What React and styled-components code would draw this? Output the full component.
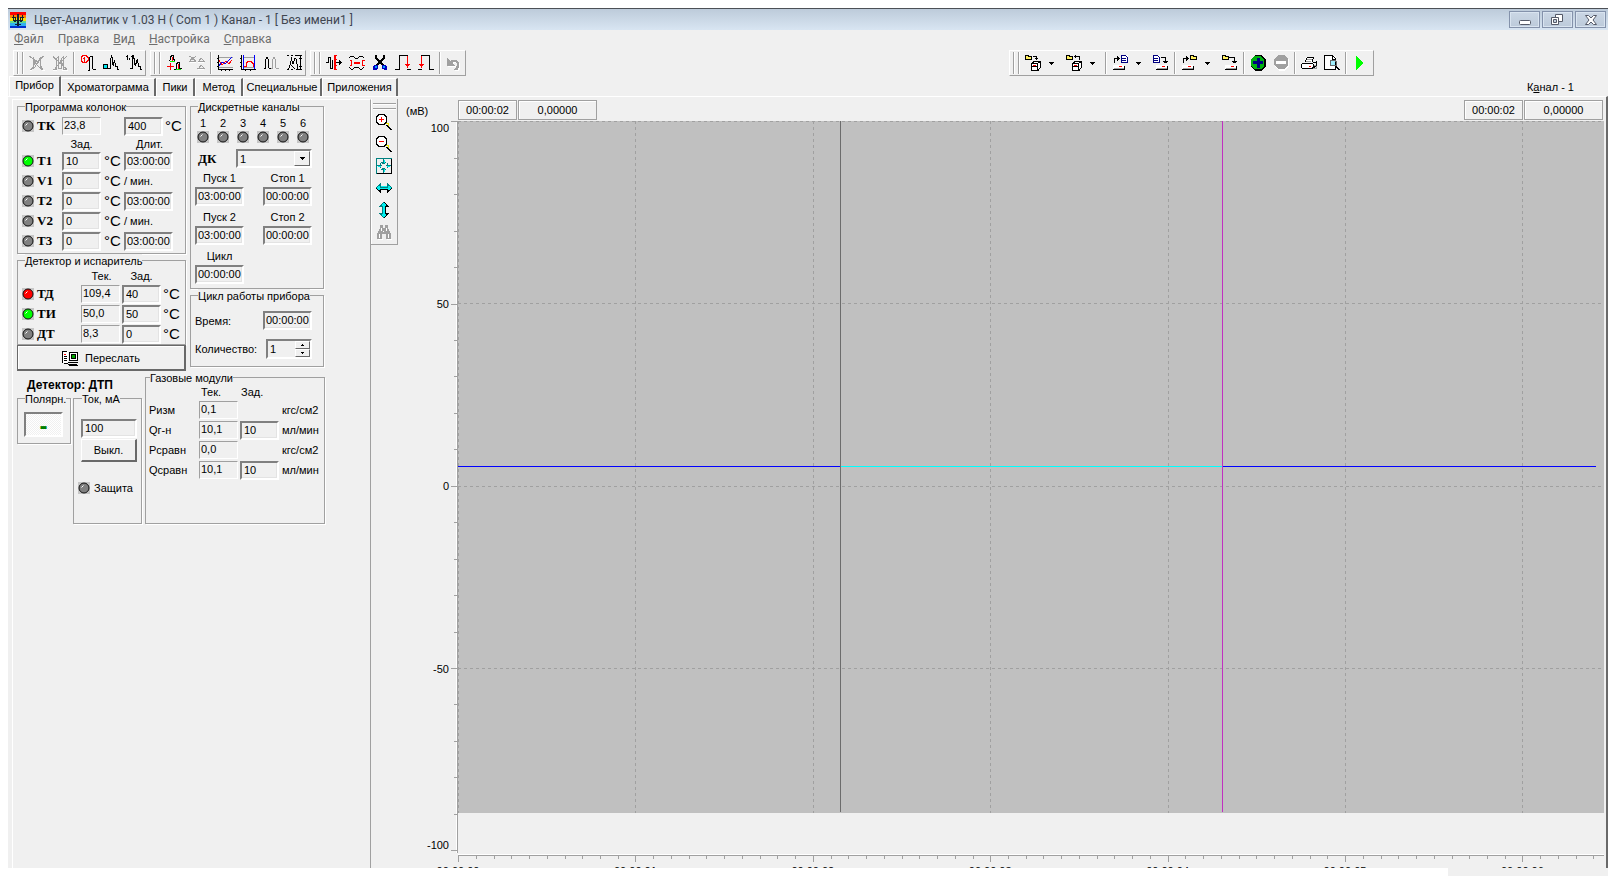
import React from "react";
import styled, { createGlobalStyle, css } from "styled-components";

const face = "#f0f0f0";
const shade = "#a0a0a0";
const dark = "#696969";
const uiFont = '"Liberation Sans", Arial, sans-serif';
const captionFont = 'Roboto, "Noto Sans", sans-serif';

const GlobalStyle = createGlobalStyle`
  * { box-sizing: border-box; }
  body { margin: 0; background: #fff; color: #000; font: 11px/12px ${uiFont}; }
  button, input, select, output { font: inherit; color: inherit; margin: 0; border-radius: 0; }
  svg { display: block; }
`;

const Page = styled.div`
  display: flex;
  flex-direction: column;
  min-height: 100vh;
  padding: 8px 8px 0;
`;
const Window = styled.div`
  display: flex;
  flex: 1;
  flex-direction: column;
  background: ${face};
  border-top: 1px solid #4c5056;
`;
const BottomStrip = styled.div`
  align-self: flex-end;
  width: 10%;
  height: 8px;
  background: ${face};
`;

/* Caption and menu */
const TitleBar = styled.header`
  display: flex;
  align-items: center;
  height: 21px;
  padding: 0 2px;
  background: linear-gradient(#bdcbda, #d8e5f2);
`;
const Title = styled.h1`
  flex: 1;
  margin: 0 0 0 8px;
  font: 12px/18px ${captionFont};
  color: #3f4650;
  white-space: nowrap;
`;
const CaptionButtons = styled.div`
  display: flex;
  gap: 2px;
`;
const CaptionButton = styled.button`
  display: flex;
  align-items: center;
  justify-content: center;
  width: 31px;
  height: 17px;
  padding: 0;
  background: linear-gradient(#cbd7e5, #bccada);
  border: 1px solid #8492ab;
  box-shadow: inset 0 0 0 1px #d9e4f0;
`;
const MenuBar = styled.nav`
  display: flex;
  height: 20px;
`;
const MenuItem = styled.button`
  padding: 0 8px 2px 6px;
  background: none;
  border: 0;
  font: 12px/18px ${captionFont};
  color: #6d6d6d;
`;

/* Toolbars */
const ToolRow = styled.div`
  display: flex;
  gap: 4px;
  padding-left: 5px;
`;
const Band = styled.div`
  display: flex;
  align-items: center;
  height: 26px;
  border: 1px solid;
  border-color: #fff ${shade} ${shade} #fff;
  ${(p) => p.$floating && css`margin: 0 234px 0 auto; padding-right: 2px;`}
`;
const Grip = styled.span`
  width: 6px;
  height: 22px;
  margin: 0 2px 0 3px;
  border: solid ${shade};
  border-width: 0 1px;
  box-shadow: inset 1px 0 #fff, inset -1px 0 ${face}, 1px 0 #fff;
`;
const ToolButton = styled.button`
  display: flex;
  align-items: center;
  justify-content: center;
  width: 23px;
  height: 22px;
  padding: 0;
  background: none;
  border: 0;
`;
const DropButton = styled(ToolButton)`
  width: 18px;
  padding-right: 4px;
`;
const Separator = styled.span`
  width: 1px;
  height: 22px;
  margin: 0 2px;
  background: ${shade};
  box-shadow: 1px 0 #fff;
`;

/* Tabs */
const TabRow = styled.div`
  display: flex;
  align-items: flex-end;
  height: 20px;
  padding-left: 1px;
`;
const Tab = styled.button`
  min-width: ${(p) => p.$width}px;
  height: ${(p) => (p.$active ? 20 : 18)}px;
  padding: ${(p) => (p.$active ? "0 2px 4px" : "0 2px 1px")};
  background: ${face};
  border: solid;
  border-width: 1px 2px 0 1px;
  border-color: #fff ${dark} #fff #fff;
  white-space: nowrap;
`;
const ChannelName = styled.span`
  margin: 0 34px 3px auto;
  white-space: nowrap;
`;

/* Main area */
const Main = styled.main`
  display: flex;
  flex: 1;
  padding: 2px 2px 0 4px;
  border-top: 1px solid #fff;
  border-right: 2px solid ${dark};
`;
const SidePanel = styled.section`
  width: 359px;
  padding: 0 0 0 4px;
  border: solid;
  border-width: 1px 1px 0;
  border-color: #fff ${shade} #fff #fff;
`;
const Columns = styled.div`
  display: flex;
  gap: ${(p) => p.$gap || 0}px;
  align-items: ${(p) => p.$align || "stretch"};
`;
const Column = styled.div`
  width: ${(p) => p.$width}px;
`;
const Group = styled.fieldset`
  min-width: 0;
  width: ${(p) => (p.$width ? `${p.$width}px` : "auto")};
  margin: 0;
  padding: ${(p) => p.$pad || "0"};
  border: 1px solid ${shade};
  box-shadow: 1px 1px #fff;
`;
const Legend = styled.legend`
  height: 13px;
  margin-left: ${(p) => (p.$flush ? 1 : 7)}px;
  padding: 2px 0 0;
  line-height: 11px;
  white-space: nowrap;
  background: ${face};
`;
const Grid = styled.div`
  display: grid;
  grid-template-columns: ${(p) => p.$cols};
  grid-auto-rows: 20px;
  align-items: center;
  white-space: nowrap;
`;
const HeadRow = styled(Grid)`
  grid-auto-rows: ${(p) => p.$height}px;
  text-align: ${(p) => p.$text || "center"};
`;
const Unit = styled.span`
  padding-left: ${(p) => p.$gap || 0}px;
  font-size: 15px;
`;
const Name = styled.label`
  font: bold 13px/16px "Liberation Serif", "Times New Roman", serif;
`;
const Field = styled.input`
  width: ${(p) => p.$width || 39}px;
  height: 19px;
  padding: 0 0 1px 2px;
  background: ${face};
  border: 2px solid;
  border-color: #808080 #fff #fff #808080;
  box-shadow: inset -1px -1px #e3e3e3;
`;
const TimeField = styled(Field)`
  width: 49px;
  padding-left: 1px;
`;
const Readout = styled.output`
  display: block;
  width: 39px;
  height: 18px;
  padding: 1px 1px 0;
  border: 1px solid;
  border-color: ${shade} #fff #fff ${shade};
`;
const Paired = styled.div`
  display: flex;
  align-items: center;
  gap: 2px;
`;
const LampCell = styled.span`
  padding-left: 4px;
`;
const SendButton = styled.button`
  display: flex;
  align-items: center;
  justify-content: center;
  gap: 7px;
  width: 100%;
  height: 26px;
  padding: 0;
  background: ${face};
  border: solid;
  border-width: 1px 2px 2px 1px;
  border-color: ${dark};
  box-shadow: inset 1px 1px #fff;
`;
const PushButton = styled.button`
  display: block;
  width: 56px;
  height: 23px;
  margin-top: 1px;
  padding: 0;
  background: ${face};
  border: solid;
  border-width: 1px 2px 2px 1px;
  border-color: #fff ${dark} ${dark} #fff;
`;
const Lamps = styled.div`
  display: grid;
  grid-template-columns: repeat(6, 20px);
  justify-items: center;
  row-gap: 2px;
  padding: 4px 2px 6px;
`;
const ComboRow = styled.div`
  display: flex;
  align-items: center;
  justify-content: space-between;
  padding: 0 11px 0 7px;
`;
const Combo = styled.div`
  position: relative;
  width: 76px;
`;
const Select = styled.select`
  appearance: none;
  display: block;
  width: 100%;
  height: 19px;
  padding: 0 2px;
  background: ${face};
  border: 2px solid;
  border-color: #808080 #fff #fff #808080;
`;
const ComboArrow = styled.span`
  position: absolute;
  top: 2px;
  right: 2px;
  display: flex;
  align-items: center;
  justify-content: center;
  width: 16px;
  height: 15px;
  background: ${face};
  border: 1px solid;
  border-color: #fff ${dark} ${dark} #fff;
  pointer-events: none;
`;
const TimeGrid = styled.div`
  display: grid;
  grid-template-columns: 49px 49px;
  column-gap: 19px;
  padding-left: 4px;
`;
const TimeCell = styled.label`
  display: flex;
  flex-direction: column;
  height: 39px;
  padding-top: 2px;
  text-align: center;
  line-height: 17px;
`;
const CycleRow = styled.div`
  display: flex;
  align-items: center;
  justify-content: space-between;
`;
const CycleBody = styled.div`
  display: flex;
  flex-direction: column;
  gap: 9px;
  padding: 9px 11px 7px 4px;
`;
const Spin = styled.div`
  display: flex;
  width: 46px;
  height: 20px;
  border: 2px solid;
  border-color: #808080 #fff #fff #808080;
`;
const SpinInput = styled.input`
  flex: 1;
  min-width: 0;
  padding: 0 2px;
  background: ${face};
  border: 0;
`;
const SpinButtons = styled.div`
  display: flex;
  flex-direction: column;
  width: 15px;
`;
const SpinButton = styled.button`
  display: flex;
  flex: 1;
  align-items: center;
  justify-content: center;
  padding: 0;
  background: ${face};
  border: 1px solid;
  border-color: #fff ${dark} ${dark} #fff;
`;
const DetectorName = styled.h2`
  margin: 0;
  padding: 7px 0 0 10px;
  height: 21px;
  font: bold 12px/14px ${uiFont};
`;
const Polarity = styled.output`
  display: flex;
  align-items: center;
  justify-content: center;
  width: 39px;
  height: 25px;
  padding-top: 2px;
  border: 2px solid;
  border-color: #808080 #fff #fff #808080;
  background: repeating-conic-gradient(#fff 0 25%, ${face} 0 50%) 0 0 / 2px 2px;
  color: #008000;
  font: bold 24px/20px ${uiFont};
`;
const Guard = styled.div`
  display: flex;
  align-items: center;
  gap: 4px;
  margin: 20px 0 0 -3px;
`;

/* Chart */
const ViewTools = styled.div`
  display: flex;
  flex-direction: column;
  align-items: center;
  align-self: flex-start;
  width: 27px;
  padding: 4px 0 1px;
  border: solid;
  border-width: 0 1px 1px 0;
  border-color: ${shade};
  box-shadow: inset 1px 0 #fff;
`;
const ViewGrip = styled.span`
  width: 23px;
  height: 6px;
  margin-bottom: 2px;
  border: solid ${shade};
  border-width: 1px 0;
  box-shadow: inset 0 1px #fff, 0 1px #fff;
`;
const ChartPane = styled.section`
  display: flex;
  flex: 1;
  min-width: 0;
  flex-direction: column;
  overflow: hidden;
`;
const StatusRow = styled.div`
  display: flex;
  gap: 1px;
  height: 22px;
  padding: 1px 1px 1px 0;
`;
const AxisUnit = styled.span`
  width: 59px;
  padding: 5px 0 0 8px;
`;
const StatusBox = styled.output`
  width: ${(p) => p.$width}px;
  border: 1px solid ${shade};
  box-shadow: inset 1px 1px #fff;
  line-height: 19px;
  text-align: center;
  ${(p) => p.$push && css`margin-left: auto;`}
`;
const PlotRow = styled.div`
  display: flex;
  flex: 1;
`;
const YAxis = styled.svg`
  width: 60px;
  overflow: visible;
`;
const Plot = styled.svg`
  flex: 1;
  min-width: 0;
`;
const XAxisRow = styled.div`
  height: 15px;
  padding-left: 60px;
`;
const XAxis = styled.svg`
  width: 100%;
  height: 15px;
  overflow: visible;
`;

/* Icons: each layer is [colour, path, filled] */
function Icon({ size = 16, layers }) {
  return (
    <svg width={size} height={size} viewBox="0 0 16 16" shapeRendering="crispEdges" aria-hidden="true">
      {layers.map(([color, d, filled], i) => (
        <path key={i} d={d} fill={filled ? color : "none"} stroke={filled ? "none" : color} />
      ))}
    </svg>
  );
}

const K = "#000";
const R = "#f00";
const cube = [
  ["#fff", "M6 9l3-3h6v6l-3 3H6z", true],
  [K, "M6.500 8.500h6v7h-6zM6.500 8.500L9 6.500h6.500v6L13 15.500M12.500 8.500l3-2M7 11.500h5"],
  [R, "M8 10h3v1H8z", true],
];
const folder = (x, y) => [
  ["#ffef60", `M${x + 1} ${y + 1}h5v3h-5z`, true],
  [K, `M${x}.5 ${y}.5h3v1h3v3h-6z`],
];
const drive = (x) => [
  ["#fff", `M${x} 10h11v4h-11z`, true],
  [shade, `M${x + 1} 13.500h10`],
  [K, `M${x} 14.500h11.500v-4`],
  [R, `M${x + 6} 11h3v1h-3z`, true],
];
const sheet = (x) => [
  ["#fff", `M${x} 0h7v7h-7z`, true],
  ["#000080", `M${x}.5 .500h4l2 2v5h-6zM${x + 1} 3.500h4M${x + 1} 5.500h4`],
];
const lens = [
  ["#fff", "M3 1h5l2 2v5l-2 2H3L1 8V3z", true],
  [K, "M3 .500h5L10.500 3v5L8 10.500H3L.5 8V3zM11 11l5 5M10 11l5 5"],
  ["#ee0", "M10 9.500h2v2"],
];

const icons = {
  app: [
    ["#f00", "M0 0h16v4H0z", true], ["#ff8000", "M0 3h16v3H0z", true], ["#ffe000", "M0 6h16v3H0z", true],
    ["#60d890", "M0 9h16v2H0z", true], ["#30b0f0", "M0 11h16v3H0z", true], ["#0030d0", "M0 14h16v2H0z", true],
    ["#102030", "M8.500 2v12M7.500 2v12M3.500 3v6M12.500 3v6M5.500 5v4M10.500 5v4M2 5.500h3M11 5.500h3M3 8.500h10M5 12.500h6M4 9.500h2M10 9.500h2"],
  ],
  peaksOff: [[shade, "M.5 1.500L5 4l2 5 6 5.500M1 14.500l3-2L7 5l2 3 2-5 1 8 2 3.500M14.500 1L9 7l-3 5-4 3M4.500 2v12M11.500 2v12"], ["#fff", "M1 15.500h2M13 15.500h3"]],
  peaksOff2: [[shade, "M1 1.500L15 14.500M15 1L6 10l-4 5M1 14.500h3V4l2-2v11h3V4l2-2v12h4M8 5l3 5"], ["#fff", "M1 15.500h4M10 15.500h6"]],
  onePeak: [[R, "M3 .500h3l2 2v3l-2 2H3l-2-2v-3zM4.500 2v5M3 3.500h2"], [K, "M8 15.500h1.500V3l1-2h2v12l1 1.500h2"]],
  levelPeak: [[K, "M5 13.500h2.500V5l1-4 1 3v5l1 1 1-5 1 6h2v3h2"], ["#00e5ee", "M1 10h3v3H1z", true], [K, "M.5 9.500h4v4h-4z"]],
  ratioPeak: [[K, "M1.500 0v5M0 1.500h2M6.500 0v5M5 1.500h2M3.500 3v2M4 13.500h2.500V7l1-5 1 3v4l1 1 2-6 1 7h2v3h2"]],
  addPeak: [[K, "M3 5.500h1l1-4 1-1h1l1 4 1 1M8 14.500h2l1-6 1-1h1l1 6h2"], [R, "M1 11.500h7M4.500 8v7M6.500 2v4M12.500 9v5"], ["#0f0", "M4 6.500h5M10 14.500h5"]],
  peaksOff3: [[shade, "M0 6.500h7M1 6l2-4 3 4M1 1l6 5M7 1L1 6M9 6.500h7M10 6l2-3 3 3M0 1.500h2M8 13.500h8M10 13l2-3 3 3"], ["#fff", "M1 7.500h6M9 7.500h6M9 14.500h6"]],
  chartLines: [[K, "M1.500 0v14.500H16M0 3.500h2M0 7.500h2M0 11.500h2M4.500 14v2M8.500 14v2M12.500 14v2"], [shade, "M2 2.500h14M2 12.500h14"], ["#00f", "M2 11l3-4 3 2 4-4 3-3"], [R, "M2 5l3 5 4-4 3 3 3-4"]],
  chartFrame: [[K, "M1.500 0v14.500H16M0 3.500h2M0 7.500h2M0 11.500h2M5.500 14v2M10.500 14v2"], ["#00f", "M3.500 0v14M14.500 0v14"], [shade, "M4 2.500h10M4 12.500h10"], [R, "M4 11.500h2v-3l2-2h3l2 2v3h1"]],
  twinPeaks: [[K, "M1 13.500h1.500V6l1-4h1l1 4v6l1 1.500h2"], [shade, "M8 13.500h1.500V6l1-4h1l1 4v6l1 1.500h2"]],
  measure: [[K, "M1 .500h2M5 .500h2M9 .500h7M1 14.500h2M5 14.500h2M10 14.500h6M14.500 1v13M13 3.500h3M13 11.500h3M2 13.500h1L5.500 4 7 9l2-6 1 1 2 9.500M4 9l5 5"]],
  shift: [[K, "M0 7.500h2.500V2.500h2v11h2V4.500M10 7.500h6M13.500 5v5M14.500 6v3"], [R, "M8.500 0v15M9.500 0v15M8 .500h3M8 4.500h3M8 10.500h3M8 14.500h3"]],
  bounds: [[K, "M0 3l2-2h2l2 2h3l2-2h2l2 2M0 12l2 2h2l2-2h3l2 2h2l2-2"], [R, "M.5 5.500h2v5H.5M15.500 5.500h-2v5h2M5 7.500h6M5 8.500h6"]],
  cut: [[K, "M3.500 0v3l7 7M12.500 0v3l-7 7M4.500 0v3l7 7M11.500 0v3l-7 7"], ["#0000c0", "M2.500 10.500h3v3h-3zM10.500 10.500h3v3h-3zM1.500 11v3h3M14.500 11v3h-3"], ["#00a0ff", "M3 11h2v2H3zM11 11h2v2h-2z", true]],
  pulseEnd: [[K, "M0 14.500h4.500V.500h8M12 14.500h4"], [R, "M12.500 1v12M10 9.500h5M11 10.500h3M12 11.500h1"]],
  pulseStart: [[K, "M0 14.500h4M3 .500h8.500v14H16"], [R, "M3.500 1v12M1 9.500h5M2 10.500h3M3 11.500h1"]],
  undo: [["#fff", "M2 4v8h8l-3-3c4-3 6 0 4 4l-2 3h4c4-8-1-13-8-9z", true], [shade, "M1 3v8h8L6 8c4-3 6 0 4 4l-2 3h4c4-8-1-13-8-9z", true]],
  loadBox: [...folder(0, 0), ...cube, [K, "M8 1.500h3.500v3M10 3.500h3"]],
  saveBox: [...folder(0, 0), ...cube, [K, "M9 1.500h4.500v3M9.500 0v3M8 1.500h2"]],
  openSheet: [...sheet(9), ...drive(1), [K, "M2.500 8V3.500h5M5.500 1v5M6.500 2v3"]],
  saveSheet: [...sheet(0), ...drive(3), [K, "M8 2.500h4.500V8M10 6.500h5M11 7.500h3"]],
  openFolder: [...folder(9, 0), ...drive(1), [K, "M2.500 8V3.500h5M5.500 1v5M6.500 2v3"]],
  saveFolder: [...folder(0, 0), ...drive(3), [K, "M7 2.500h5.500V8M10 6.500h5M11 7.500h3"]],
  plus: [[K, "M5 0h7l4 5v6l-4 5H5l-4-4V4z", true], ["#00b010", "M5 1h6l3 4v6l-3 3H4l-3-3V4z", true], ["#000080", "M7 3h3v3h3v3h-3v4H7V9H3V6h4z", true]],
  minus: [["#fff", "M6 1h6l4 4v6l-4 5H6l-4-4V5z", true], [shade, "M5 0h6l4 4v6l-4 4H5l-4-4V4z", true], ["#fff", "M3 6h10v3H3z", true]],
  print: [["#fff", "M5 2h8l-2 5H3zM1 8h12v5H1z", true], [shade, "M6 4.500h5M5 6.500h5M12 10h3v3h-3z"], [K, "M4 7L6.500 2.500h6L11 7M1.500 8.500h10l1 1v3l-2 1h-9l-1-1v-3zM12 8l3-1v4l-3 2"], [R, "M8 11h2v1H8z", true]],
  preview: [["#fff", "M1 1h11v14H1z", true], [K, "M.5 .500h8l3 3v11H.5zM8.500 1v3h3M11 11l4 4M12 11l4 4"], ["#a0f0ff", "M7 6h4v4H7z", true], [dark, "M7 5.500h4l1 1v4h-5l-1-1v-3z"]],
  play: [["#0f0", "M4 1l7 7-7 7z", true]],
  zoomIn: [...lens, [R, "M3 5.500h5M5.500 3v5"]],
  zoomOut: [...lens, [R, "M3 5.500h5"]],
  fit: [[K, "M0 15.500h16M15.500 0v16"], ["#008080", "M.5 16V.500h15M7.500 1v5M7.500 10v5M1 7.500h5M10 7.500h5M5 4.500h5M6 5.500h3M5 11.500h5M6 10.500h3M4.500 5v5M11.500 5v5"], ["#0ee", "M8.500 2v3M8.500 11v3M2 8.500h3M11 8.500h3"]],
  horizontal: [["#0ee", "M0 8l5-5v3h6V3l5 5-5 5v-3H5v3z", true], ["#008080", "M0 8l4.500-4v3h7V4L16 8"], [K, "M0 8l4.500 4V9.500h7V12L16 8"]],
  vertical: [["#0ee", "M8 0l5 5h-3v6h3l-5 5-5-5h3V5H3z", true], ["#008080", "M8 0L4 4.500h2.500v7H4L8 16"], [K, "M8 0l4 4.500H9.500v7H12L8 16"]],
  binoculars: [
    ["#fff", "M2 15h5v1H2zM11 15h5v1h-5z", true],
    [shade, "M4 1h3v3h2V1h3v3l1 2 2 4v5h-5v-5H6v5H1v-5l2-4 1-2z", true],
    ["#fff", "M3 10h1v4H3zM12 10h1v4h-1zM5 4h1v3H5zM10 4h1v3h-1zM7 7h1v1H7z", true],
  ],
  send: [["#fff", "M1 1h5v12H1zM8 3h7v8H8z", true], [K, "M.5 13V1.500H5M7.500 2.500h8v8h-8zM9.500 4.500h4v4h-4zM2 13.500h4M6 12.500h10M6 14.500h9M7 15.500h9"], ["#0a0", "M10 5h3v3h-3z", true], [R, "M2 4h2v1H2z", true], [K, "M2 6.500h3M2 8.500h3M2 10.500h3"]],
};

const ledColors = { off: "#808080", green: "#00ff00", red: "#ff0000" };
function Led({ state = "off", label }) {
  return (
    <svg width="12" height="12" viewBox="0 0 12 12" role="img" aria-label={label || state}>
      <rect width="12" height="12" fill="#c6c6c6" />
      <circle cx="6" cy="6" r="5" fill={ledColors[state]} stroke="#111" />
      <path d="M3.500 5.500L5.500 3.500" stroke="#fff" />
    </svg>
  );
}

function Arrow({ up, small }) {
  return (
    <svg width={small ? 3 : 6} height={small ? 2 : 3} viewBox="0 0 6 3" preserveAspectRatio="none" shapeRendering="crispEdges" aria-hidden="true">
      <path d={up ? "M0 3h6L3 0z" : "M0 0h6L3 3z"} />
    </svg>
  );
}

const leftBands = [
  [["peaksOff", "Убрать пики"], ["peaksOff2", "Убрать разметку"], null, ["onePeak", "Один пик"], ["levelPeak", "Уровень"], ["ratioPeak", "Отношение"]],
  [["addPeak", "Добавить пик"], ["peaksOff3", "Удалить пик"], null, ["chartLines", "Графики"], ["chartFrame", "Рамка"], ["twinPeaks", "Сравнение"], ["measure", "Измерение"]],
  [["shift", "Сдвиг"], ["bounds", "Границы"], ["cut", "Вырезать"], ["pulseEnd", "Конец"], ["pulseStart", "Начало"], null, ["undo", "Отменить"]],
];
const fileBand = [
  ["loadBox", "Загрузить", true], ["saveBox", "Сохранить", true], null,
  ["openSheet", "Открыть метод", true], ["saveSheet", "Сохранить метод"], null,
  ["openFolder", "Открыть файл", true], ["saveFolder", "Сохранить файл"], null,
  ["plus", "Добавить"], ["minus", "Удалить"], null,
  ["print", "Печать"], ["preview", "Просмотр"], null,
  ["play", "Пуск"],
];

function ToolBand({ items, floating }) {
  return (
    <Band $floating={floating} role="toolbar">
      <Grip />
      {items.map((item, i) =>
        item ? (
          <React.Fragment key={i}>
            <ToolButton aria-label={item[1]}><Icon layers={icons[item[0]]} /></ToolButton>
            {item[2] && <DropButton aria-label={`${item[1]}: список`}><Arrow /></DropButton>}
          </React.Fragment>
        ) : (
          <Separator key={i} />
        )
      )}
    </Band>
  );
}

const stages = [
  { id: "T1", value: "10", time: "03:00:00", state: "green" },
  { id: "V1", value: "0" },
  { id: "T2", value: "0", time: "03:00:00" },
  { id: "V2", value: "0" },
  { id: "T3", value: "0", time: "03:00:00" },
];
const heaters = [
  { id: "ТД", now: "109,4", set: "40", state: "red" },
  { id: "ТИ", now: "50,0", set: "50", state: "green" },
  { id: "ДТ", now: "8,3", set: "0", state: "off" },
];
const gases = [
  { name: "Ризм", now: "0,1", unit: "кгс/см2" },
  { name: "Qг-н", now: "10,1", set: "10", unit: "мл/мин" },
  { name: "Рсравн", now: "0,0", unit: "кгс/см2" },
  { name: "Qсравн", now: "10,1", set: "10", unit: "мл/мин" },
];
const timers = [["Пуск 1", "03:00:00"], ["Стоп 1", "00:00:00"], ["Пуск 2", "03:00:00"], ["Стоп 2", "00:00:00"], ["Цикл", "00:00:00"]];
const programCols = "19px 25px 39px 23px 1fr";

function ColumnProgram() {
  return (
    <Group $pad="3px 0 2px">
      <Legend>Программа колонок</Legend>
      <Grid $cols={programCols}>
        <LampCell><Led /></LampCell>
        <Name htmlFor="tk">ТК</Name>
        <Readout>23,8</Readout>
        <span />
        <Paired><Field id="tk" defaultValue="400" /><Unit>°C</Unit></Paired>
      </Grid>
      <HeadRow $cols="44px 39px 24px 49px" $height={15}>
        <span /><span>Зад.</span><span /><span>Длит.</span>
      </HeadRow>
      <Grid $cols={programCols}>
        {stages.map((s) => (
          <React.Fragment key={s.id}>
            <LampCell><Led state={s.state} /></LampCell>
            <Name htmlFor={s.id}>{s.id}</Name>
            <Field id={s.id} defaultValue={s.value} />
            <Unit $gap={3}>°C</Unit>
            {s.time ? <TimeField aria-label={`${s.id} длительность`} defaultValue={s.time} /> : <span>/ мин.</span>}
          </React.Fragment>
        ))}
      </Grid>
    </Group>
  );
}

function Heaters() {
  return (
    <Group>
      <Legend>Детектор и испаритель</Legend>
      <HeadRow $cols="63px 41px 39px" $height={17}>
        <span /><span>Тек.</span><span>Зад.</span>
      </HeadRow>
      <Grid $cols="19px 44px 41px 39px 1fr">
        {heaters.map((h) => (
          <React.Fragment key={h.id}>
            <LampCell><Led state={h.state} /></LampCell>
            <Name htmlFor={h.id}>{h.id}</Name>
            <Readout>{h.now}</Readout>
            <Field id={h.id} defaultValue={h.set} />
            <Unit $gap={2}>°C</Unit>
          </React.Fragment>
        ))}
      </Grid>
    </Group>
  );
}

function Channels() {
  return (
    <Group $pad="0 0 3px">
      <Legend>Дискретные каналы</Legend>
      <Lamps>
        {[1, 2, 3, 4, 5, 6].map((n) => <span key={n}>{n}</span>)}
        {[1, 2, 3, 4, 5, 6].map((n) => <Led key={n} label={`Канал ${n}`} />)}
      </Lamps>
      <ComboRow>
        <Name htmlFor="dk">ДК</Name>
        <Combo>
          <Select id="dk" defaultValue="1">{[1, 2, 3, 4, 5, 6].map((n) => <option key={n}>{n}</option>)}</Select>
          <ComboArrow><Arrow /></ComboArrow>
        </Combo>
      </ComboRow>
      <TimeGrid>
        {timers.map(([name, value]) => (
          <TimeCell key={name}>{name}<TimeField defaultValue={value} /></TimeCell>
        ))}
      </TimeGrid>
    </Group>
  );
}

function Cycle() {
  return (
    <Group>
      <Legend>Цикл работы прибора</Legend>
      <CycleBody>
        <CycleRow><label htmlFor="time">Время:</label><TimeField id="time" defaultValue="00:00:00" /></CycleRow>
        <CycleRow>
          <label htmlFor="count">Количество:</label>
          <Spin>
            <SpinInput id="count" defaultValue="1" />
            <SpinButtons>
              <SpinButton aria-label="Больше"><Arrow up small /></SpinButton>
              <SpinButton aria-label="Меньше"><Arrow small /></SpinButton>
            </SpinButtons>
          </Spin>
        </CycleRow>
      </CycleBody>
    </Group>
  );
}

function Detector() {
  return (
    <Column $width={128}>
      <DetectorName>Детектор: ДТП</DetectorName>
      <Columns $gap={2} $align="flex-start">
        <Group $width={54} $pad="7px 0 6px 6px">
          <Legend $flush>Полярн.</Legend>
          <Polarity>-</Polarity>
        </Group>
        <Group $width={69} $pad="14px 0 29px 7px">
          <Legend $flush>Ток, мА</Legend>
          <Field $width={56} aria-label="Ток, мА" defaultValue="100" />
          <PushButton>Выкл.</PushButton>
          <Guard><Led /><span>Защита</span></Guard>
        </Group>
      </Columns>
    </Column>
  );
}

function GasModules() {
  return (
    <Group $width={180} $pad="0 0 0 3px">
      <Legend $flush>Газовые модули</Legend>
      <HeadRow $cols="52px 40px 40px" $height={16} $text="left">
        <span /><span>Тек.</span><span>Зад.</span>
      </HeadRow>
      <Grid $cols="50px 41px 42px 1fr">
        {gases.map((g) => (
          <React.Fragment key={g.name}>
            <span>{g.name}</span>
            <Readout>{g.now}</Readout>
            {g.set ? <Field aria-label={g.name} defaultValue={g.set} /> : <span />}
            <span>{g.unit}</span>
          </React.Fragment>
        ))}
      </Grid>
    </Group>
  );
}

/* Chart geometry, in percent of the plot */
const xMajor = [0, 1, 2, 3, 4, 5, 6];
const xStep = 15.48;
const yLabels = [100, 50, 0, -50, -100];
const signal = [
  { from: 0, to: 33.4, color: "#0000ff" },
  { from: 33.4, to: 66.7, color: "#00ffff" },
  { from: 66.7, to: 99.3, color: "#0000ff" },
];

function Chart() {
  const xMinor = Array.from({ length: 65 }, (_, i) => (i * xStep) / 10).filter((x) => x < 100);
  return (
    <ChartPane>
      <StatusRow>
        <AxisUnit>(мВ)</AxisUnit>
        <StatusBox $width={59}>00:00:02</StatusBox>
        <StatusBox $width={79}>0,00000</StatusBox>
        <StatusBox $width={59} $push>00:00:02</StatusBox>
        <StatusBox $width={79}>0,00000</StatusBox>
      </StatusRow>
      <PlotRow>
        <YAxis shapeRendering="crispEdges">
          <line x1="58.500" x2="58.500" y1="0" y2="100%" stroke="#fff" />
          <line x1="59.500" x2="59.500" y1="0" y2="100%" stroke={shade} />
          {Array.from({ length: 21 }, (_, i) => (
            <line key={i} x1={i % 5 ? 56 : 53} x2="59" y1={`${i * 4.98 + 0.1}%`} y2={`${i * 4.98 + 0.1}%`} stroke={shade} />
          ))}
          {yLabels.map((v, i) => (
            <text key={v} x="51" y={`${i * 24.95}%`} dy={i === 0 ? 11 : i === 4 ? -3 : 4} textAnchor="end">{v}</text>
          ))}
        </YAxis>
        <Plot shapeRendering="crispEdges">
          <rect width="100%" height="94.5%" fill="#c0c0c0" />
          <g stroke={shade} strokeDasharray="3 3">
            {[0.1, 24.9, 49.9, 74.8].map((y) => <line key={y} x1="0" x2="100%" y1={`${y}%`} y2={`${y}%`} />)}
            {xMajor.map((n) => <line key={n} x1={`${n * xStep + 0.050}%`} x2={`${n * xStep + 0.050}%`} y1="0" y2="94.5%" />)}
          </g>
          {signal.map((s) => <line key={s.from} x1={`${s.from}%`} x2={`${s.to}%`} y1="47.2%" y2="47.2%" stroke={s.color} />)}
          <line x1="33.4%" x2="33.4%" y1="0" y2="94.4%" stroke="#6c6c6c" />
          <line x1="66.7%" x2="66.7%" y1="0" y2="94.4%" stroke="#c030c0" />
        </Plot>
      </PlotRow>
      <XAxisRow>
        <XAxis shapeRendering="crispEdges">
          <line x1="0" x2="100%" y1="1.500" y2="1.500" stroke="#fff" />
          <line x1="0" x2="100%" y1="2.500" y2="2.500" stroke={shade} />
          {xMinor.map((x, i) => <line key={i} x1={`${x + 0.050}%`} x2={`${x + 0.050}%`} y1="2" y2={i % 10 ? 6 : 9} stroke={shade} />)}
          {xMajor.map((n) => <text key={n} x={`${n * xStep}%`} y="22" textAnchor="middle">{`00:00:0${n}`}</text>)}
        </XAxis>
      </XAxisRow>
    </ChartPane>
  );
}

const viewTools = [["zoomIn", "Увеличить"], ["zoomOut", "Уменьшить"], ["fit", "Весь график"], ["horizontal", "По ширине"], ["vertical", "По высоте"], ["binoculars", "Поиск"]];
const tabs = [["Прибор", 52], ["Хроматограмма", 95], ["Пики", 39], ["Метод", 48], ["Специальные", 79], ["Приложения", 76]];

export default function App() {
  return (
    <Page>
      <GlobalStyle />
      <Window>
        <TitleBar>
          <Icon layers={icons.app} />
          <Title>Цвет-Аналитик v 1.03 H ( Com 1 ) Канал - 1 [ Без имени1 ]</Title>
          <CaptionButtons>
            <CaptionButton aria-label="Свернуть">
              <svg width="12" height="11" viewBox="0 0 12 11"><rect x=".5" y="6.500" width="11" height="4" rx="1" fill="#fff" stroke="#555a68" /></svg>
            </CaptionButton>
            <CaptionButton aria-label="Восстановить">
              <svg width="13" height="11" viewBox="0 0 13 11" fill="#fff" stroke="#555a68"><path d="M4.500 .500h7v7h-7z" /><path d="M.5 3.500h7v7h-7z" /><path d="M2.500 5.500h3v3h-3z" fill="#c3d0df" /></svg>
            </CaptionButton>
            <CaptionButton aria-label="Закрыть">
              <svg width="12" height="10" viewBox="0 0 12 10"><path d="M.5 .500h3L6 3 8.500 .500h3L8 5l3.500 4.500h-3L6 7 3.500 9.500h-3L4 5z" fill="#fff" stroke="#555a68" /></svg>
            </CaptionButton>
          </CaptionButtons>
        </TitleBar>
        <MenuBar>
          <MenuItem><u>Ф</u>айл</MenuItem>
          <MenuItem>Правка</MenuItem>
          <MenuItem><u>В</u>ид</MenuItem>
          <MenuItem><u>Н</u>астройка</MenuItem>
          <MenuItem><u>С</u>правка</MenuItem>
        </MenuBar>
        <ToolRow>
          {leftBands.map((items, i) => <ToolBand key={i} items={items} />)}
          <ToolBand items={fileBand} floating />
        </ToolRow>
        <TabRow>
          {tabs.map(([name, width], i) => <Tab key={name} $width={width} $active={i === 0}>{name}</Tab>)}
          <ChannelName>К<u>а</u>нал - 1</ChannelName>
        </TabRow>
        <Main>
          <SidePanel>
            <Columns $gap={4}>
              <Column $width={169}>
                <ColumnProgram />
                <Heaters />
                <SendButton><Icon layers={icons.send} />Переслать</SendButton>
              </Column>
              <Column $width={134}>
                <Channels />
                <Cycle />
              </Column>
            </Columns>
            <Columns>
              <Detector />
              <GasModules />
            </Columns>
          </SidePanel>
          <ViewTools role="toolbar">
            <ViewGrip />
            {viewTools.map(([name, label]) => (
              <ToolButton key={name} aria-label={label}><Icon layers={icons[name]} /></ToolButton>
            ))}
          </ViewTools>
          <Chart />
        </Main>
      </Window>
      <BottomStrip />
    </Page>
  );
}
